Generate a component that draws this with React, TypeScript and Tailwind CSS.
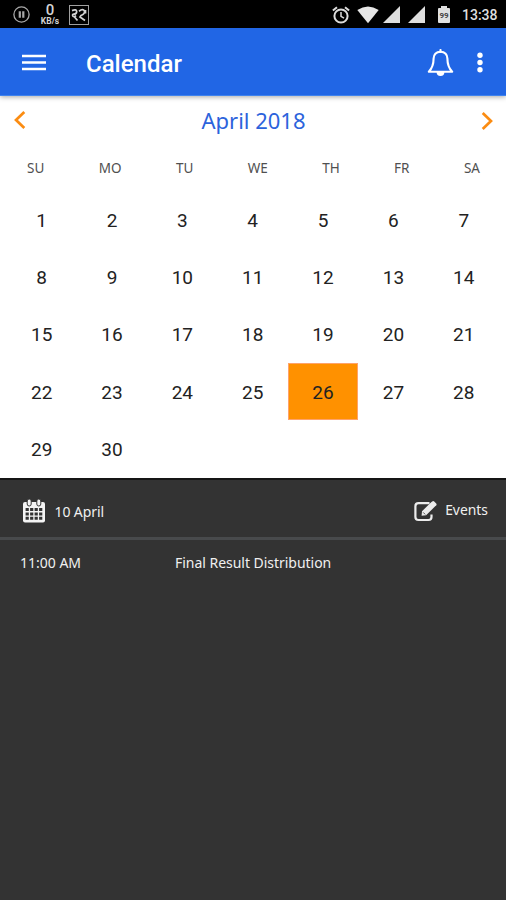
import React from 'react';

const weekdays = ['SU', 'MO', 'TU', 'WE', 'TH', 'FR', 'SA'];
const days = Array.from({ length: 30 }, (_, i) => i + 1);
const selectedDay = 26;

const events = [{ time: '11:00 AM', title: 'Final Result Distribution' }];

function StatusBar() {
  return (
    <div className="flex h-[28px] shrink-0 items-center bg-black pl-[13px] pr-[8px] font-['Roboto',sans-serif] text-[#d4d4d4]">
      <svg className="mt-px h-[17px] w-[17px]" viewBox="0 0 17 17" fill="none" stroke="#a8a8a8">
        <circle cx="8.5" cy="8.5" r="7.6" strokeWidth="1.3" />
        <path d="M6.8 5.3v6.4M10.3 5.3v6.4" strokeWidth="2.2" />
      </svg>
      <div className="ml-[9px] flex w-[22px] flex-col items-center">
        <span className="text-[15px] font-medium leading-[14px]">0</span>
        <span className="text-[8.5px] font-bold leading-[9px]">KB/s</span>
      </div>
      <div className="ml-[8px] mt-px flex h-[20px] w-[20px] items-center justify-center border border-[#a0a0a0]">
        <svg className="h-[14px] w-[16px]" viewBox="0 0 16 14" fill="none" stroke="#d4d4d4" strokeWidth="1.7">
          <path d="M1 2.6Q5.5 .6 5.7 3.6Q5.5 6.2 2.8 6.2Q1 6.2 1.8 8Q3 9.5 5 7.6M3.5 9l3 3.5" />
          <path d="M8 3.2Q12 .2 13.5 3Q14 6 10 7.5L9 9l5 3.5M14.5 2v3.5" />
        </svg>
      </div>
      <div className="ml-auto mt-px flex items-center">
        <svg className="h-[18px] w-[18px]" viewBox="0 0 18 18" fill="none" stroke="#dcdcdc">
          <circle cx="9" cy="10" r="6.6" strokeWidth="2" />
          <path d="M9 6v4.4l3 1.8" strokeWidth="1.5" />
          <path d="M.9 4.6 5 1.2M17.1 4.6 13 1.2" strokeWidth="2" />
        </svg>
        <svg className="ml-[7px] h-[18px] w-[22px]" viewBox="0 0 22 18" fill="#e6e6e6">
          <path d="M11 17.3.3 4Q11-3.2 21.7 4z" />
        </svg>
        <svg className="ml-[4px] h-[17px] w-[17px]" viewBox="0 0 17 17" fill="#dedede">
          <path d="M17 0v17H0z" />
        </svg>
        <svg className="ml-[8px] h-[17px] w-[17px]" viewBox="0 0 17 17" fill="#dedede">
          <path d="M17 0v17H0z" />
        </svg>
        <div className="ml-[13px] flex flex-col items-center">
          <span className="h-[2px] w-[6px] bg-[#e0e0e0]" />
          <span className="flex h-[15px] w-[12px] items-center justify-center rounded-[1px] bg-[#e0e0e0] text-[8px] font-bold leading-none text-[#444]">
            99
          </span>
        </div>
        <span className="ml-[12px] mt-px w-[36px] whitespace-nowrap text-[14px] font-medium leading-[16px] text-[#dedede]">13:38</span>
      </div>
    </div>
  );
}

function AppBar() {
  return (
    <header className="relative z-10 flex h-[68px] shrink-0 items-center border-b border-[#3f83ee] bg-[#2166e5] pl-[22px] pr-[23px] text-white shadow-[0_1px_5px_rgba(0,0,0,0.35)]">
      <button aria-label="Menu" className="mt-[2px]">
        <svg className="h-[17px] w-[24px]" viewBox="0 0 24 17" stroke="white" strokeWidth="2.3">
          <path d="M0 2h24M0 8.5h24M0 15h24" />
        </svg>
      </button>
      <h1 className="ml-[40px] mt-[4px] font-['Roboto',sans-serif] text-[24px] font-medium leading-7">Calendar</h1>
      <button aria-label="Notifications" className="ml-auto mt-[2px]">
        <svg className="h-[28px] w-[27px]" viewBox="0 0 27 28" fill="none" stroke="white" strokeWidth="2.1" strokeLinejoin="round">
          <path d="M13.5 2.8C9 2.8 6.6 5.6 6.6 9.6C6.6 15.5 5.5 19 1.8 22.8H25.2C21.5 19 20.4 15.5 20.4 9.6C20.4 5.6 18 2.8 13.5 2.8Z" />
          <path d="M13.5 1v2" strokeLinecap="round" />
          <path d="M9.6 23h7.8a3.9 4 0 0 1-7.8 0z" fill="white" stroke="none" />
        </svg>
      </button>
      <button aria-label="More" className="ml-[23px] mt-[2px]">
        <svg className="h-[21px] w-[6px]" viewBox="0 0 6 21" fill="white">
          <circle cx="3" cy="3.3" r="2.7" />
          <circle cx="3" cy="10.5" r="2.7" />
          <circle cx="3" cy="17.7" r="2.7" />
        </svg>
      </button>
    </header>
  );
}

function MonthView() {
  return (
    <section className="h-[382px] shrink-0 bg-white">
      <div className="flex h-[48px] items-center justify-between pl-[14px] pr-[13px]">
        <svg className="h-[18px] w-[12px]" viewBox="0 0 12 18" fill="none" stroke="#fb8c12" strokeWidth="2.7">
          <path d="M10.3 1 2 9l8.3 8" />
        </svg>
        <h2 className="mb-px font-['Noto_Sans',sans-serif] text-[22px] leading-7 text-[#2c63dc]">April 2018</h2>
        <svg className="mt-[2px] h-[18px] w-[12px]" viewBox="0 0 12 18" fill="none" stroke="#fb8c12" strokeWidth="2.7">
          <path d="M1.7 1 10 9l-8.3 8" />
        </svg>
      </div>
      <div className="flex h-[48px] items-center justify-between pl-[27px] pr-[26px] font-['Noto_Sans',sans-serif] text-[13.5px] text-[#505050]">
        {weekdays.map((day) => (
          <span key={day}>{day}</span>
        ))}
      </div>
      <div className="grid auto-rows-[57.1px] grid-cols-[repeat(7,70.35px)] pl-[6.5px] font-['Roboto',sans-serif] text-[19px] text-[#222]">
        {days.map((day) => (
          <div
            key={day}
            className={
              day === selectedDay
                ? 'flex items-center justify-center border border-[#ffa36a] bg-[#ff9100] pt-[2px]'
                : 'flex items-center justify-center pt-[2px]'
            }
          >
            {day}
          </div>
        ))}
      </div>
    </section>
  );
}

function CalendarIcon() {
  return (
    <svg className="h-[24px] w-[22px]" viewBox="0 0 22 24" fill="#f4f4f4">
      <rect x="0" y="3" width="22" height="20.5" rx="2" />
      <rect x="4.2" y="0" width="4" height="7" rx="2" stroke="#333333" strokeWidth="1" />
      <rect x="13.8" y="0" width="4" height="7" rx="2" stroke="#333333" strokeWidth="1" />
      <path
        d="M2.6 9h3.2v3H2.6zM7.1 9h3.2v3H7.1zM11.6 9h3.2v3h-3.2zM16.1 9h3.2v3h-3.2zM2.6 13.4h3.2v3H2.6zM7.1 13.4h3.2v3H7.1zM11.6 13.4h3.2v3h-3.2zM16.1 13.4h3.2v3h-3.2zM2.6 17.8h3.2v3H2.6zM7.1 17.8h3.2v3H7.1zM11.6 17.8h3.2v3h-3.2zM16.1 17.8h3.2v3h-3.2z"
        fill="#333333"
      />
    </svg>
  );
}

function EditIcon() {
  return (
    <svg className="h-[21px] w-[23px]" viewBox="0 0 23 21" fill="none">
      <path
        d="M15.5 2.2H4.5Q1.4 2.2 1.4 5.2V16Q1.4 19 4.5 19H14.5Q17.5 19 17.5 16V13.5"
        stroke="#ececec"
        strokeWidth="2.2"
      />
      <path d="M8 10.2 17.2 1.3 18.2.4q1-.8 2 0l2 2q.8 1 0 2l-1 .9L12.1 14.2 7.6 14.7z" fill="#ececec" />
      <path d="M9.2 11.4l2 2" stroke="#555555" strokeWidth="1" />
    </svg>
  );
}

function EventPanel() {
  return (
    <section className="flex-1 border-t-2 border-[#151515] bg-[#333333] font-['Noto_Sans',sans-serif] text-[14px] text-[#f0f0f0]">
      <div className="flex h-[60px] items-center border-b-[3px] border-[#484a4c] pl-[23px] pr-[18px]">
        <div className="mt-[5px] flex items-center">
          <CalendarIcon />
          <span className="ml-[9.5px] tracking-[-0.1px]">10 April</span>
        </div>
        <button className="ml-auto mt-[4px] flex items-center">
          <span className="mt-px">
            <EditIcon />
          </span>
          <span className="ml-[8px] text-[13.9px]">Events</span>
        </button>
      </div>
      {events.map((event) => (
        <div key={event.title} className="flex h-[45px] items-center pl-[20px]">
          <span className="w-[155px]">{event.time}</span>
          <span className="tracking-[-0.03px]">{event.title}</span>
        </div>
      ))}
    </section>
  );
}

export default function App() {
  return (
    <div className="flex h-screen w-full flex-col overflow-hidden">
      <StatusBar />
      <AppBar />
      <MonthView />
      <EventPanel />
    </div>
  );
}
